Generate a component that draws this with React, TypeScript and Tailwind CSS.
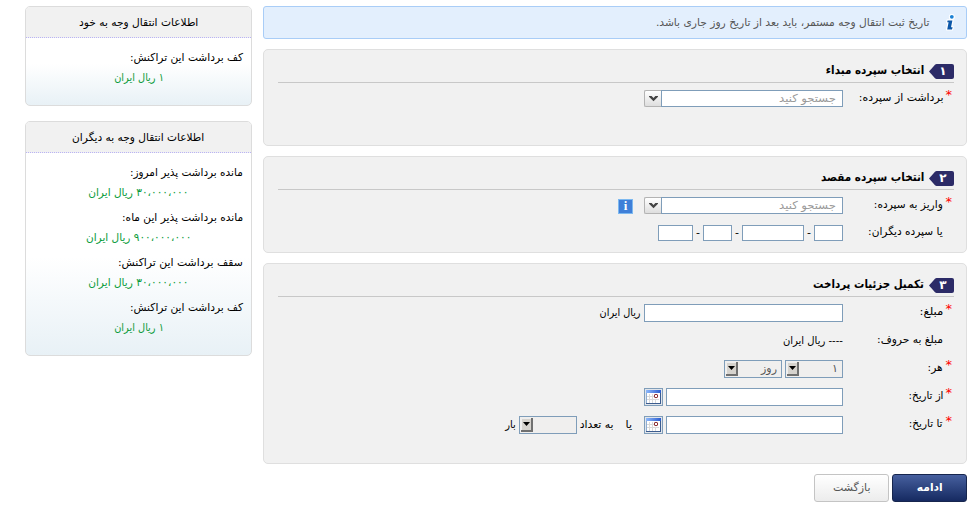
import type { ReactNode } from 'react';

const font = "font-['DejaVu_Sans','Noto_Sans',sans-serif]";

/** A line of text laid out in a box of fixed width; the inner span may be condensed towards its right edge. */
function T({ w, c = '', children }: { w: string; c?: string; children: ReactNode }) {
  return (
    <span className={`inline-flex shrink-0 justify-start whitespace-nowrap leading-[18px] ${w}`}>
      <span className={`inline-block origin-right ${c}`}>{children}</span>
    </span>
  );
}

function Badge({ n }: { n: string }) {
  return (
    <span className="relative flex h-[15px] w-[25px] shrink-0 items-center justify-center">
      <svg className="absolute inset-0" width="25" height="15" viewBox="0 0 25 15">
        <path d="M0 7.5 L6 0.7 Q6.7 0 7.6 0 H23 Q25 0 25 2 V13 Q25 15 23 15 H7.6 Q6.7 15 6 14.3 Z" fill="#2c2b67" />
      </svg>
      <span className="relative mr-[-3px] text-[12px] leading-[15px] font-bold text-white">{n}</span>
    </span>
  );
}

function Panel({ n, title, w, h, children }: { n: string; title: string; w: string; h: string; children: ReactNode }) {
  return (
    <section className={`rounded-[5px] border border-[#dfdfdf] bg-[#f1f1f1] pr-[12px] pl-[14px] ${h}`}>
      <header className="flex h-[33px] items-end gap-[5px] border-b border-[#c8c8c8] pb-[3px] text-[11.5px] font-bold text-black">
        <Badge n={n} />
        <T w="w-[120px]" c={w}>{title}</T>
      </header>
      {children}
    </section>
  );
}

function Row({ label, c = 'scale-x-[0.96]', req, h, children }: { label: string; c?: string; req?: boolean; h: string; children: ReactNode }) {
  return (
    <div className={`flex items-center ${h}`}>
      <div className="flex w-[111px] shrink-0 items-center">
        <span className="mb-[8px] w-[11px] shrink-0 pr-[2px] text-[13px] leading-[14px] text-[#f00]">{req ? '*' : ''}</span>
        <T w="w-[100px]" c={`mb-[2px] ${c}`}>{label}</T>
      </div>
      {children}
    </div>
  );
}

const box = 'shrink-0 border border-[#7f9db9]';

function Combo() {
  return (
    <div className="flex h-[17px] w-[199px] shrink-0">
      <div className={`${box} flex h-[17px] w-[182px] items-center bg-white pr-[6px] text-[#999]`}>
        <T w="w-[60px]" c="scale-x-[1.055] mt-[1px]">جستجو کنید</T>
      </div>
      <div className="flex h-[17px] w-[17px] items-center justify-center rounded-l-[2px] border border-r-0 border-[#b3b3b3] bg-linear-to-b from-white to-[#dedede]">
        <svg width="9" height="7" viewBox="0 0 9 7"><path d="M0 1 H2.6 L4.5 2.9 L6.4 1 H9 V1.8 L4.5 6.2 L0 1.8 Z" fill="#444" /></svg>
      </div>
    </div>
  );
}

function Select({ v }: { v: string }) {
  return (
    <div className={`${box} flex h-[18px] w-[58px] items-center justify-between bg-[#f0efee] text-[#555]`}>
      <span className="pr-[4px] leading-[16px]">{v}</span>
      <span className="ml-[1px] flex h-[14px] w-[12px] items-center justify-center border-r-2 border-b-2 border-[#707070] bg-[#d6d3ce] shadow-[inset_1px_1px_0_#eee]">
        <svg width="7" height="4" viewBox="0 0 7 4"><path d="M0 0 H7 L3.5 4 Z" fill="#000" /></svg>
      </span>
    </div>
  );
}

function Calendar() {
  return (
    <div className={`${box} mr-[3px] flex h-[18px] w-[19px] items-center justify-center bg-[#e2e6ec]`}>
      <svg width="15" height="14" viewBox="0 0 15 14">
        <defs>
          <linearGradient id="calbar"><stop stopColor="#8db8fa" /><stop offset="1" stopColor="#2a5cd0" /></linearGradient>
        </defs>
        <rect width="15" height="14" fill="#3c5c8e" />
        <rect width="14" height="13" fill="#8fadd2" />
        <rect x="1" y="1" width="13" height="12" fill="#fff" />
        <rect width="15" height="3" fill="url(#calbar)" />
        <path d="M1 6.5 H8 M1 9.5 H13 M3.5 4 V13 M6.5 4 V13 M9.5 9 V13" stroke="#dadada" />
        <rect x="8.5" y="4.5" width="3" height="3" rx="0.7" fill="#fff" stroke="#7a0f14" />
      </svg>
    </div>
  );
}

type Item = { label: string; value: string; lc: string; vw: string; vc: string };

function Side({ title, w, c, h, items }: { title: string; w: string; c: string; h: string; items: Item[] }) {
  return (
    <section className={`overflow-hidden rounded-[5px] border border-[#dcdcdc] bg-[linear-gradient(to_top,#e8f1f6,#ffffff_42%)] ${h}`}>
      <h2 className="flex h-[31px] items-center justify-center border-b border-dotted border-[#b9b3f5] bg-[#f1f1f1] pt-[1px]">
        <T w={w} c={c}>{title}</T>
      </h2>
      <div className="pt-[10px]">
        {items.map(({ label, value, lc, vw, vc }, i) => (
          <div key={i} className="h-[45px]">
            <div className="flex h-[20px] items-center pr-[8px]"><T w="w-[130px]" c={lc}>{label}</T></div>
            <div className="flex h-[20px] items-center justify-center text-[#0a9b3a]"><T w={vw} c={vc}>{value}</T></div>
          </div>
        ))}
      </div>
    </section>
  );
}

const floor: Item = { label: 'کف برداشت این تراکنش:', value: '۱ ریال ایران', lc: 'scale-x-[0.966]', vw: 'w-[50px]', vc: 'scale-x-[0.89]' };

export default function App() {
  return (
    <div dir="rtl" className={`flex h-[530px] w-[973px] gap-[11px] overflow-hidden bg-white pt-[6px] pr-[6px] text-[11px] text-black ${font}`}>
      <main className="w-[704px] shrink-0">
        <div className="flex h-[33px] items-center rounded-[3px] border border-[#a9cdf7] bg-[#e3effd] pr-[10px] text-[#555]">
          <svg width="11" height="17" viewBox="0 0 11 17" className="ml-[16px]">
            <g fill="#fff" stroke="#fff" strokeWidth="2.4" strokeLinejoin="round"><circle cx="6.8" cy="3" r="1.8" /><path d="M2.6 6.4 H7.4 L6 13.2 H7.6 L7 15.4 H2.2 L3.6 8.2 H2.2 Z" /></g>
            <circle cx="6.8" cy="2.8" r="1.9" fill="#1a80d4" />
            <path d="M2.6 6.4 H7.4 L6 13.2 H7.6 L7 15.4 H2.2 L3.6 8.2 H2.2 Z" fill="#0c57a8" />
          </svg>
          <T w="w-[274px]" c="scale-x-[0.972]">تاریخ ثبت انتقال وجه مستمر، باید بعد از تاریخ روز جاری باشد.</T>
        </div>
        <div className="mt-[10px] flex flex-col gap-[10px]">
          <Panel n="۱" title="انتخاب سپرده مبداء" w="scale-x-[0.901]" h="h-[97px]">
            <Row label="برداشت از سپرده:" c="scale-x-[0.99]" req h="h-[31px]"><Combo /></Row>
          </Panel>
          <Panel n="۲" title="انتخاب سپرده مقصد" w="scale-x-[0.904]" h="h-[97px]">
            <Row label="واریز به سپرده:" req h="h-[31px]">
              <Combo />
              <span className="mt-[1px] mr-[11px] flex h-[15px] w-[15px] items-center justify-center border border-[#7db9f0] bg-[#3f7fd8] font-['Liberation_Serif',serif] text-[13px] leading-[12px] font-bold text-white">i</span>
            </Row>
            <Row label="یا سپرده دیگران:" h="h-[24px]">
              <div className={`${box} h-[16px] w-[29px] bg-white`} />
              <span className="w-[10px] text-center">-</span>
              <div className={`${box} h-[16px] w-[62px] bg-white`} />
              <span className="w-[10px] text-center">-</span>
              <div className={`${box} h-[16px] w-[29px] bg-white`} />
              <span className="w-[10px] text-center">-</span>
              <div className={`${box} h-[16px] w-[35px] bg-white`} />
            </Row>
          </Panel>
          <Panel n="۳" title="تکمیل جزئیات پرداخت" w="scale-x-[0.894]" h="h-[201px]">
            <div className="pt-[2px]">
              <Row label="مبلغ:" c="scale-x-[1.07]" req h="h-[28px]">
                <div className={`${box} h-[18px] w-[199px] bg-white`} />
                <span className="mr-[3px]"><T w="w-[42px]" c="scale-x-[0.88]">ریال ایران</T></span>
              </Row>
              <Row label="مبلغ به حروف:" c="scale-x-[0.97]" h="h-[28px]"><T w="w-[61px]" c="scale-x-[0.91]">---- ریال ایران</T></Row>
              <Row label="هر:" req h="h-[28px]">
                <Select v="۱" />
                <span className="w-[3px]" />
                <Select v="روز" />
              </Row>
              <Row label="از تاریخ:" c="scale-x-[0.93]" req h="h-[28px]">
                <div className={`${box} h-[18px] w-[177px] bg-white`} />
                <Calendar />
              </Row>
              <Row label="تا تاریخ:" c="scale-x-[0.95]" req h="h-[28px]">
                <div className={`${box} h-[18px] w-[177px] bg-white`} />
                <Calendar />
                <span className="mr-[12px]"><T w="w-[18px]">یا</T></span>
                <T w="w-[37px]" c="scale-x-[0.98]">به تعداد</T>
                <Select v="" />
                <span className="mr-[3px]"><T w="w-[12px]" c="scale-x-[0.9]">بار</T></span>
              </Row>
            </div>
          </Panel>
        </div>
        <div className="mt-[10px] flex gap-[3px]">
          <button className="flex h-[28px] w-[75px] items-center justify-center rounded-[3px] border border-[#17264e] bg-linear-to-b from-[#47609f] to-[#162a61] font-bold text-white">
            <T w="w-[26px]" c="scale-x-[0.97]">ادامه</T>
          </button>
          <button className="flex h-[28px] w-[75px] items-center justify-center rounded-[3px] border border-[#c4c4c4] bg-linear-to-b from-white to-[#ececec] text-[#555]">
            <T w="w-[38px]">بازگشت</T>
          </button>
        </div>
      </main>
      <aside className="flex w-[227px] shrink-0 flex-col gap-[15px]">
        <Side title="اطلاعات انتقال وجه به خود" w="w-[119px]" c="scale-x-[0.967]" h="h-[100px]" items={[floor]} />
        <Side
          title="اطلاعات انتقال وجه به دیگران"
          w="w-[131px]"
          c="scale-x-[0.963]"
          h="h-[235px]"
          items={[
            { label: 'مانده برداشت پذیر امروز:', value: '۳۰،۰۰۰،۰۰۰ ریال ایران', lc: 'scale-x-[0.95]', vw: 'w-[100px]', vc: 'scale-x-[0.96]' },
            { label: 'مانده برداشت پذیر این ماه:', value: '۹۰۰،۰۰۰،۰۰۰ ریال ایران', lc: 'scale-x-[0.96]', vw: 'w-[106px]', vc: 'scale-x-[0.955]' },
            { label: 'سقف برداشت این تراکنش:', value: '۳۰،۰۰۰،۰۰۰ ریال ایران', lc: 'scale-x-[0.985]', vw: 'w-[100px]', vc: 'scale-x-[0.96]' },
            floor,
          ]}
        />
      </aside>
    </div>
  );
}
